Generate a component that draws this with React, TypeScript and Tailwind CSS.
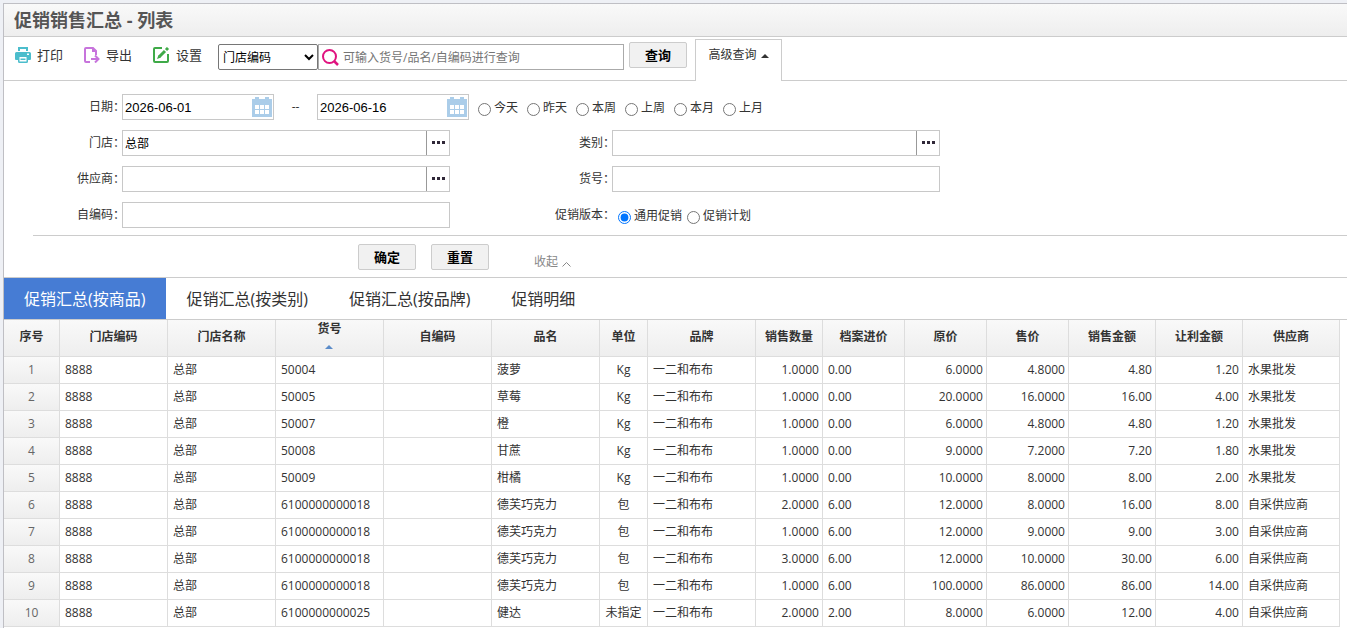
import { useState } from 'react';

type Align = 'left' | 'center' | 'right';

interface Column {
  label: string;
  width: number;
  align: Align;
  sorted?: boolean;
}

const COLUMNS: Column[] = [
  { label: '序号', width: 56, align: 'center' },
  { label: '门店编码', width: 108, align: 'left' },
  { label: '门店名称', width: 108, align: 'left' },
  { label: '货号', width: 108, align: 'left', sorted: true },
  { label: '自编码', width: 108, align: 'left' },
  { label: '品名', width: 108, align: 'left' },
  { label: '单位', width: 48, align: 'center' },
  { label: '品牌', width: 108, align: 'left' },
  { label: '销售数量', width: 67, align: 'right' },
  { label: '档案进价', width: 82, align: 'left' },
  { label: '原价', width: 82, align: 'right' },
  { label: '售价', width: 82, align: 'right' },
  { label: '销售金额', width: 87, align: 'right' },
  { label: '让利金额', width: 87, align: 'right' },
  { label: '供应商', width: 97, align: 'left' },
];

const TOTAL_WIDTH = COLUMNS.reduce((sum, c) => sum + c.width, 0);

const ROWS: string[][] = [
  ['8888', '总部', '50004', '', '菠萝', 'Kg', '一二和布布', '1.0000', '0.00', '6.0000', '4.8000', '4.80', '1.20', '水果批发'],
  ['8888', '总部', '50005', '', '草莓', 'Kg', '一二和布布', '1.0000', '0.00', '20.0000', '16.0000', '16.00', '4.00', '水果批发'],
  ['8888', '总部', '50007', '', '橙', 'Kg', '一二和布布', '1.0000', '0.00', '6.0000', '4.8000', '4.80', '1.20', '水果批发'],
  ['8888', '总部', '50008', '', '甘蔗', 'Kg', '一二和布布', '1.0000', '0.00', '9.0000', '7.2000', '7.20', '1.80', '水果批发'],
  ['8888', '总部', '50009', '', '柑橘', 'Kg', '一二和布布', '1.0000', '0.00', '10.0000', '8.0000', '8.00', '2.00', '水果批发'],
  ['8888', '总部', '6100000000018', '', '德芙巧克力', '包', '一二和布布', '2.0000', '6.00', '12.0000', '8.0000', '16.00', '8.00', '自采供应商'],
  ['8888', '总部', '6100000000018', '', '德芙巧克力', '包', '一二和布布', '1.0000', '6.00', '12.0000', '9.0000', '9.00', '3.00', '自采供应商'],
  ['8888', '总部', '6100000000018', '', '德芙巧克力', '包', '一二和布布', '3.0000', '6.00', '12.0000', '10.0000', '30.00', '6.00', '自采供应商'],
  ['8888', '总部', '6100000000018', '', '德芙巧克力', '包', '一二和布布', '1.0000', '6.00', '100.0000', '86.0000', '86.00', '14.00', '自采供应商'],
  ['8888', '总部', '6100000000025', '', '健达', '未指定', '一二和布布', '2.0000', '2.00', '8.0000', '6.0000', '12.00', '4.00', '自采供应商'],
];

const TABS = ['促销汇总(按商品)', '促销汇总(按类别)', '促销汇总(按品牌)', '促销明细'];
const RANGES = ['今天', '昨天', '本周', '上周', '本月', '上月'];
const VERSIONS = ['通用促销', '促销计划'];

const CELL_ALIGN: Record<Align, string> = {
  left: 'text-left pl-[5px]',
  center: 'text-center',
  right: 'text-right pr-[3px]',
};

function PrintIcon() {
  return (
    <svg width="16" height="16" viewBox="0 0 16 16" fill="#4bbdcc">
      <path d="M3 0h10v4h-2V2H5v2H3z" />
      <path fillRule="evenodd" d="M1.5 5h13A1.5 1.5 0 0 1 16 6.500V12a1 1 0 0 1-1 1h-2v1.500A1.500 1.500 0 0 1 11.500 16h-7A1.500 1.500 0 0 1 3 14.500V13H1a1 1 0 0 1-1-1V6.500A1.500 1.500 0 0 1 1.500 5zM12 6.500v1.500h2V6.500zM4.500 10v4.500h7V10z" />
      <path d="M5.500 11.500h5V13h-5z" />
    </svg>
  );
}

function ExportIcon() {
  return (
    <svg width="16" height="16" viewBox="0 0 16 16" fill="none" stroke="#c774dc" strokeWidth="2">
      <path d="M6 15H2a1 1 0 0 1-1-1V2a1 1 0 0 1 1-1h7l3 3v4" />
      <path d="M8 0l5 5H8z" fill="#c774dc" stroke="none" />
      <path d="M7 12h7M11 8.500l3.500 3.500-3.500 3.500" />
    </svg>
  );
}

function EditIcon() {
  return (
    <svg width="17" height="16" viewBox="0 0 17 16" fill="none" stroke="#3faa48" strokeWidth="2">
      <path d="M9 1H2a1 1 0 0 0-1 1v12a1 1 0 0 0 1 1h12a1 1 0 0 0 1-1V7" />
      <path d="M6.500 9.500L12 4M13 3l2-2" strokeWidth="3" />
      <path d="M5.500 8L4 12l4-1.500z" fill="#3faa48" stroke="none" />
    </svg>
  );
}

function SearchIcon() {
  return (
    <svg width="17" height="17" viewBox="0 0 17 17" fill="none" stroke="#e0137f" strokeWidth="2">
      <circle cx="7.500" cy="7.500" r="6.500" />
      <path d="M12 12l4 4" strokeWidth="2.500" />
    </svg>
  );
}

function CalendarIcon() {
  return (
    <svg width="20" height="20" viewBox="0 0 20 20">
      <path d="M0 2h3V0h4v2h6V0h4v2h3v18H0z" fill="#abcde9" />
      <path d="M3 8h4v4H3zM8 8h4v4H8zM13 8h4v4h-4zM3 13h4v4H3zM8 13h4v4H8zM13 13h4v4h-4z" fill="#fff" />
    </svg>
  );
}

function ToolButton({ icon, label }: { icon: React.ReactNode; label: string }) {
  return (
    <button type="button" className="flex items-center gap-[6px] text-[13px] leading-5 text-[#333]">
      {icon}
      {label}
    </button>
  );
}

function PlainButton({ label }: { label: string }) {
  return (
    <button
      type="button"
      className="h-[26px] w-[58px] rounded-[2px] border border-[#ccc] bg-[#f1f1f1] text-[13px] leading-5 font-bold text-black"
    >
      {label}
    </button>
  );
}

function FieldLabel({ id, label }: { id: string; label: string }) {
  return (
    <label htmlFor={id} className="-mr-[3px] text-right leading-[26px] whitespace-nowrap">
      {label}：
    </label>
  );
}

function TextField({ id, value = '', picker = false }: { id: string; value?: string; picker?: boolean }) {
  return (
    <div className="flex h-[26px] border border-[#c8c8c8] bg-white">
      <input id={id} type="text" defaultValue={value} className="min-w-0 flex-1 px-[2px] pt-[2px] text-black outline-none" />
      {picker && (
        <button
          type="button"
          aria-label="选择"
          className="flex w-[23px] items-center justify-center border-l border-[#999] pb-[2px]"
        >
          <svg width="13" height="3" viewBox="0 0 13 3" fill="#302838">
            <path d="M0 0h3v3H0zM5 0h3v3H5zM10 0h3v3h-3z" />
          </svg>
        </button>
      )}
    </div>
  );
}

function DateField({ id, label, value }: { id: string; label: string; value: string }) {
  return (
    <div className="flex h-[26px] w-[152px] items-center border border-[#c8c8c8] bg-white pr-[1px]">
      <input
        id={id}
        aria-label={label}
        type="text"
        defaultValue={value}
        className="min-w-0 flex-1 px-[2px] pt-[2px] font-['Liberation_Sans',sans-serif] text-[13px] text-black outline-none"
      />
      <button type="button" aria-label="打开日历">
        <CalendarIcon />
      </button>
    </div>
  );
}

function Radio({ name, label, checked }: { name: string; label: string; checked?: boolean }) {
  return (
    <label className="flex items-center gap-[3px] pt-[2px] leading-6">
      <input type="radio" name={name} defaultChecked={checked} className="mt-[3px] size-[13px]" />
      {label}
    </label>
  );
}

export default function App() {
  const [tab, setTab] = useState(0);

  return (
    <div className="min-h-screen bg-[#eef0f5] pt-[3px] pl-[3px] font-['Open_Sans','Noto_Sans_CJK_SC',sans-serif] text-xs text-[#333]">
      <div className="min-h-[calc(100vh-3px)] border-t border-l border-[#bfbfc4] bg-white">
        <header className="border-b border-[#ccc] bg-linear-to-b from-[#f9f9f9] to-[#eee]">
          <h1 className="pl-[10px] text-lg leading-8 font-bold text-[#555]">促销销售汇总 - 列表</h1>
        </header>

        {/* Toolbar */}
        <div className="flex h-11 items-start border-b border-[#ccc] pl-[11px]">
          <div className="flex gap-[21px] pt-2">
            <ToolButton icon={<PrintIcon />} label="打印" />
            <ToolButton icon={<ExportIcon />} label="导出" />
            <ToolButton icon={<EditIcon />} label="设置" />
          </div>
          <select
            aria-label="查询字段"
            className="mt-[7px] ml-4 h-[26px] w-[100px] rounded-[2px] border border-[#767676] bg-white text-black"
          >
            <option>门店编码</option>
            <option>门店名称</option>
          </select>
          <div className="mt-[7px] flex h-[26px] w-[306px] items-center gap-1 border border-[#aaa] pl-[3px]">
            <SearchIcon />
            <input
              type="text"
              aria-label="查询内容"
              placeholder="可输入货号/品名/自编码进行查询"
              className="min-w-0 flex-1 pt-[2px] outline-none placeholder:text-[#757575]"
            />
          </div>
          <div className="mt-[5px] ml-[5px]">
            <PlainButton label="查询" />
          </div>
          <button
            type="button"
            className="mt-[2px] ml-2 flex h-[42px] w-[87px] justify-center gap-1 border border-b-0 border-[#ccc] bg-white pt-[3px] leading-6"
          >
            高级查询
            <svg width="8" height="4" viewBox="0 0 8 4" fill="#333" className="mt-[11px]">
              <path d="M0 4l4-4 4 4z" />
            </svg>
          </button>
        </div>

        {/* Query form */}
        <form onSubmit={(e) => e.preventDefault()}>
          <div className="grid grid-cols-[118px_328px_162px_328px] gap-y-[10px] pt-[13px] pb-[7px]">
            <FieldLabel id="date-from" label="日期" />
            <div className="col-span-3 flex h-[26px] items-center">
              <DateField id="date-from" label="开始日期" value="2026-06-01" />
              <span className="w-[43px] text-center">--</span>
              <DateField id="date-to" label="结束日期" value="2026-06-16" />
              <div className="ml-[9px] flex gap-[9px]">
                {RANGES.map((r) => (
                  <Radio key={r} name="range" label={r} />
                ))}
              </div>
            </div>
            <FieldLabel id="store" label="门店" />
            <TextField id="store" value="总部" picker />
            <FieldLabel id="category" label="类别" />
            <TextField id="category" picker />
            <FieldLabel id="supplier" label="供应商" />
            <TextField id="supplier" picker />
            <FieldLabel id="item-no" label="货号" />
            <TextField id="item-no" />
            <FieldLabel id="own-code" label="自编码" />
            <TextField id="own-code" />
            <span className="-mr-[3px] text-right leading-[26px]">促销版本：</span>
            <div className="flex h-[26px] items-center gap-[5px] pl-[6px]">
              {VERSIONS.map((v, i) => (
                <Radio key={v} name="version" label={v} checked={i === 0} />
              ))}
            </div>
          </div>
          <div className="ml-[29px] border-t border-[#ccc]" />
          <div className="flex h-[42px] items-start border-b border-[#ccc] pt-2 pl-[354px]">
            <PlainButton label="确定" />
            <div className="ml-[15px]">
              <PlainButton label="重置" />
            </div>
            <button type="button" className="mt-[6px] ml-[45px] flex items-center gap-1 leading-6 text-[#888]">
              收起
              <svg width="9" height="5" viewBox="0 0 9 5" fill="none" stroke="#888" className="mt-1">
                <path d="M.5 4.500l4-4 4 4" />
              </svg>
            </button>
          </div>
        </form>

        {/* Tabs */}
        <div role="tablist" className="flex border-b border-[#ccc]">
          {TABS.map((t, i) => (
            <button
              key={t}
              type="button"
              role="tab"
              aria-selected={i === tab}
              onClick={() => setTab(i)}
              className={`h-[41px] pt-px pr-[21px] pl-5 text-base ${i === tab ? 'bg-[#467cd4] text-white' : 'text-[#333]'}`}
            >
              {t}
            </button>
          ))}
        </div>

        {/* Result grid */}
        <div className="mr-[7px]">
          <table className="w-full table-fixed border-separate border-spacing-0">
            <colgroup>
              {COLUMNS.map((c) => (
                <col key={c.label} style={{ width: `${(c.width / TOTAL_WIDTH) * 100}%` }} />
              ))}
            </colgroup>
            <thead>
              <tr className="h-[37px]">
                {COLUMNS.map((c) => (
                  <th
                    key={c.label}
                    className={`border-r border-b border-[#ddd] bg-linear-to-b from-[#f9f9f9] to-[#eee] p-0 text-center leading-4 font-bold whitespace-nowrap ${c.sorted ? 'pb-[7px]' : 'pb-[3px]'}`}
                  >
                    {c.label}
                    {c.sorted && (
                      <svg width="8" height="4" viewBox="0 0 8 4" fill="#5b8cc9" className="mx-auto mt-2">
                        <path d="M0 4l4-4 4 4z" />
                      </svg>
                    )}
                  </th>
                ))}
              </tr>
            </thead>
            <tbody>
              {ROWS.map((row, idx) => (
                <tr key={idx} className="h-[27px]">
                  <td className="border-r border-b border-[#ddd] bg-linear-to-b from-[#f9f9f9] to-[#eee] p-0 text-center leading-6 text-[#666]">
                    {idx + 1}
                  </td>
                  {row.map((cell, i) => (
                    <td
                      key={COLUMNS[i + 1].label}
                      className={`border-r border-b border-[#ddd] py-0 leading-6 whitespace-nowrap ${CELL_ALIGN[COLUMNS[i + 1].align]}`}
                    >
                      {cell}
                    </td>
                  ))}
                </tr>
              ))}
            </tbody>
          </table>
        </div>
      </div>
    </div>
  );
}
